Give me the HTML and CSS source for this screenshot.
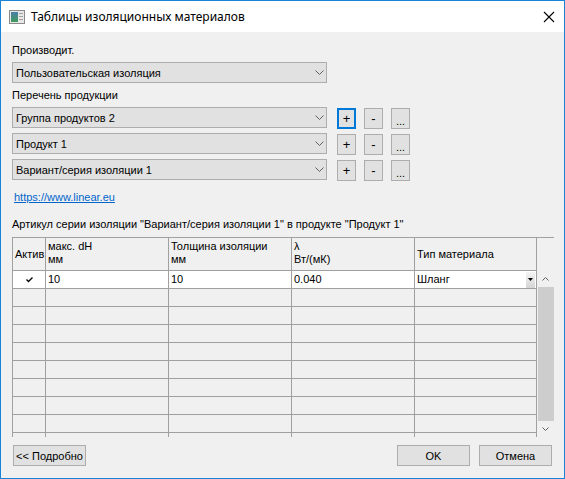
FILE: index.html
```html
<!DOCTYPE html>
<html lang="ru">
<head>
  <meta charset="UTF-8">
  <title>Таблицы изоляционных материалов</title>
  <link rel="stylesheet" href="styles.css">
</head>
<body>
  <div class="window">
    <div class="titlebar">
      <svg class="title-icon" width="16" height="14" viewBox="0 0 16 14">
        <rect x="0.5" y="0.5" width="15" height="13" fill="#e8e8e8" stroke="#8a8a8a"/>
        <defs>
          <linearGradient id="pic" x1="0" y1="0" x2="0" y2="1">
            <stop offset="0" stop-color="#4a7fa8"/>
            <stop offset="1" stop-color="#3f9a5a"/>
          </linearGradient>
        </defs>
        <rect x="2" y="2" width="7" height="10" fill="url(#pic)"/>
        <rect x="10" y="3" width="4" height="1" fill="#a0a0a0"/>
        <rect x="10" y="6" width="4" height="1" fill="#a0a0a0"/>
        <rect x="10" y="9" width="4" height="1" fill="#a0a0a0"/>
      </svg>
      <div class="title">Таблицы изоляционных материалов</div>
      <svg class="close" width="12" height="12" viewBox="0 0 12 12">
        <path d="M1 1 L11 11 M11 1 L1 11" stroke="#000" stroke-width="1.1" fill="none"/>
      </svg>
    </div>

    <div class="content">
      <div class="label first">Производит.</div>
      <div class="combo">
        <span>Пользовательская изоляция</span>
        <svg class="chevron" width="9" height="5" viewBox="0 0 9 5"><path d="M0.5 0.5 L4.5 4.5 L8.5 0.5" stroke="#606060" fill="none"/></svg>
      </div>

      <div class="label second">Перечень продукции</div>
      <div class="combo-row">
        <div class="combo">
          <span>Группа продуктов 2</span>
          <svg class="chevron" width="9" height="5" viewBox="0 0 9 5"><path d="M0.5 0.5 L4.5 4.5 L8.5 0.5" stroke="#606060" fill="none"/></svg>
        </div>
        <div class="small-btn focused">+</div>
        <div class="small-btn">-</div>
        <div class="small-btn dots">...</div>
      </div>
      <div class="combo-row">
        <div class="combo">
          <span>Продукт 1</span>
          <svg class="chevron" width="9" height="5" viewBox="0 0 9 5"><path d="M0.5 0.5 L4.5 4.5 L8.5 0.5" stroke="#606060" fill="none"/></svg>
        </div>
        <div class="small-btn">+</div>
        <div class="small-btn">-</div>
        <div class="small-btn dots">...</div>
      </div>
      <div class="combo-row">
        <div class="combo">
          <span>Вариант/серия изоляции 1</span>
          <svg class="chevron" width="9" height="5" viewBox="0 0 9 5"><path d="M0.5 0.5 L4.5 4.5 L8.5 0.5" stroke="#606060" fill="none"/></svg>
        </div>
        <div class="small-btn">+</div>
        <div class="small-btn">-</div>
        <div class="small-btn dots">...</div>
      </div>

      <a class="link" href="#">https://www.linear.eu</a>

      <div class="label third">Артикул серии изоляции "Вариант/серия изоляции 1" в продукте "Продукт 1"</div>

      <div class="grid">
        <div class="cells">
          <div class="cell head center-v">Актив</div>
          <div class="cell head">макс. dH<br>мм</div>
          <div class="cell head">Толщина изоляции<br>мм</div>
          <div class="cell head">λ<br>Вт/(мК)</div>
          <div class="cell head center-v">Тип материала</div>

          <div class="cell white check">
            <svg width="7" height="6" viewBox="0 0 7 6"><path d="M0.5 2.5 L2.5 4.5 L6.5 0.5" stroke="#000" stroke-width="1.3" fill="none"/></svg>
          </div>
          <div class="cell white">10</div>
          <div class="cell white">10</div>
          <div class="cell white">0.040</div>
          <div class="cell white cell-combo">
            <span>Шланг</span>
            <span class="drop"><svg width="5" height="3" viewBox="0 0 5 3"><path d="M0 0 H5 L2.5 3 Z" fill="#000"/></svg></span>
          </div>

          <div class="cell"></div><div class="cell"></div><div class="cell"></div><div class="cell"></div><div class="cell"></div>
          <div class="cell"></div><div class="cell"></div><div class="cell"></div><div class="cell"></div><div class="cell"></div>
          <div class="cell"></div><div class="cell"></div><div class="cell"></div><div class="cell"></div><div class="cell"></div>
          <div class="cell"></div><div class="cell"></div><div class="cell"></div><div class="cell"></div><div class="cell"></div>
          <div class="cell"></div><div class="cell"></div><div class="cell"></div><div class="cell"></div><div class="cell"></div>
          <div class="cell"></div><div class="cell"></div><div class="cell"></div><div class="cell"></div><div class="cell"></div>
          <div class="cell"></div><div class="cell"></div><div class="cell"></div><div class="cell"></div><div class="cell"></div>
          <div class="cell"></div><div class="cell"></div><div class="cell"></div><div class="cell"></div><div class="cell"></div>
          <div class="cell"></div><div class="cell"></div><div class="cell"></div><div class="cell"></div><div class="cell"></div>
        </div>
        <div class="scroll-col">
          <div class="scroll-head"></div>
          <div class="scrollbar">
            <div class="arrow"><svg width="7" height="4" viewBox="0 0 7 4"><path d="M0.5 3.5 L3.5 0.5 L6.5 3.5" stroke="#606060" fill="none"/></svg></div>
            <div class="thumb"></div>
            <div class="arrow"><svg width="7" height="4" viewBox="0 0 7 4"><path d="M0.5 0.5 L3.5 3.5 L6.5 0.5" stroke="#606060" fill="none"/></svg></div>
          </div>
        </div>
      </div>

      <div class="footer">
        <div class="btn">&lt;&lt; Подробно</div>
        <div class="spacer"></div>
        <div class="btn">OK</div>
        <div class="btn">Отмена</div>
      </div>
    </div>
  </div>
</body>
</html>
```

FILE: styles.css
```css
body {
  margin: 0;
  font-family: "Liberation Sans", Arial, sans-serif;
  font-size: 11px;
  color: #000;
}
.window {
  width: 565px;
  height: 479px;
  box-sizing: border-box;
  border: 1px solid #1883d7;
  background: #f0f0f0;
  display: flex;
  flex-direction: column;
}
.titlebar {
  height: 31px;
  flex-shrink: 0;
  background: #fff;
  display: flex;
  align-items: center;
  padding: 0 9px 0 8px;
}
.title-icon {
  margin-right: 6px;
}
.title {
  flex: 1;
  font-family: "Noto Sans", "Liberation Sans", sans-serif;
  font-size: 12px;
}
.content {
  flex: 1;
  padding: 0 11px;
  display: flex;
  flex-direction: column;
  align-items: flex-start;
}
.label {
  line-height: 13px;
  margin-bottom: 5px;
}
.label.first {
  margin-top: 12px;
}
.label.second {
  margin-top: 6px;
}
.label.third {
  margin-top: 14px;
  margin-bottom: 6px;
}
.combo {
  width: 315px;
  height: 21px;
  box-sizing: border-box;
  border: 1px solid #adadad;
  background: #e1e1e1;
  display: flex;
  align-items: center;
  justify-content: space-between;
  padding: 0 2px 0 3px;
}
.combo-row {
  display: flex;
  align-items: flex-start;
  height: 21px;
  margin-bottom: 5px;
}
.small-btn {
  width: 19px;
  height: 21px;
  box-sizing: border-box;
  margin-top: 1px;
  margin-left: 8px;
  border: 1px solid #adadad;
  background: #e1e1e1;
  display: flex;
  align-items: center;
  justify-content: center;
  font-size: 13px;
}
.combo + .small-btn {
  margin-left: 10px;
}
.small-btn.focused {
  border: 2px solid #0078d7;
}
.small-btn.dots {
  font-size: 11px;
  align-items: flex-end;
  padding-bottom: 3px;
  line-height: 8px;
}
.link {
  margin: 6px 0 0 2px;
  line-height: 13px;
  color: #0066cc;
}
.grid {
  width: 542px;
  height: 200px;
  box-sizing: border-box;
  border-left: 1px solid #a0a0a0;
  border-top: 1px solid #a0a0a0;
  display: flex;
  overflow: hidden;
}
.cells {
  display: grid;
  grid-template-columns: 33px 123px 123px 123px 122px;
  grid-auto-rows: 18px;
  grid-template-rows: 33px;
  align-content: start;
}
.cell {
  box-sizing: border-box;
  border-right: 1px solid #a0a0a0;
  border-bottom: 1px solid #a0a0a0;
  padding: 0 2px;
  line-height: 17px;
  white-space: nowrap;
  overflow: hidden;
}
.cell.head {
  padding-top: 2px;
  line-height: 13px;
}
.cell.center-v {
  padding-top: 0;
  display: flex;
  align-items: center;
}
.cell.white {
  background: #fff;
}
.cell.check {
  display: flex;
  align-items: center;
  justify-content: center;
}
.cell-combo {
  display: flex;
  align-items: center;
  justify-content: space-between;
  padding-right: 1px;
}
.drop {
  width: 9px;
  height: 16px;
  background: linear-gradient(#f4f4f4, #d4d4d4);
  display: flex;
  align-items: center;
  justify-content: center;
}
.scroll-col {
  width: 17px;
  display: flex;
  flex-direction: column;
}
.scroll-head {
  height: 33px;
  flex-shrink: 0;
}
.scrollbar {
  flex: 1;
  display: flex;
  flex-direction: column;
  background: #f0f0f0;
}
.arrow {
  height: 16px;
  display: flex;
  align-items: center;
  justify-content: center;
}
.thumb {
  flex: 1;
  margin: 0 0 0 1px;
  background: #cdcdcd;
}
.footer {
  align-self: stretch;
  display: flex;
  gap: 9px;
  margin-top: 8px;
  padding: 0 1px;
}
.spacer {
  flex: 1;
}
.btn {
  width: 73px;
  height: 21px;
  box-sizing: border-box;
  border: 1px solid #adadad;
  background: #e1e1e1;
  display: flex;
  align-items: center;
  justify-content: center;
  white-space: nowrap;
}
```
